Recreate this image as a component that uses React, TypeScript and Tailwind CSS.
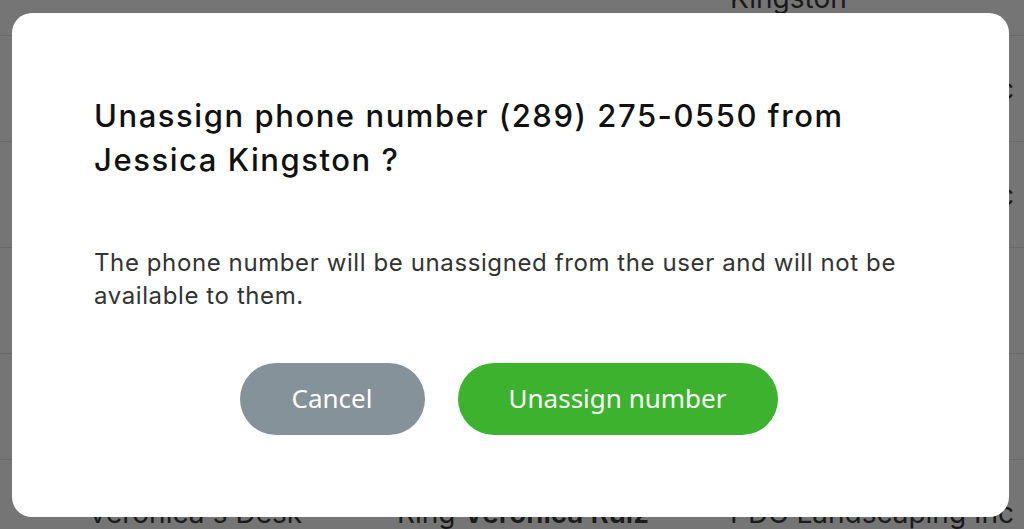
const rows = [
  { a: "", b: "", c: ["Jessica", "Kingston"] },
  { a: "", b: "", c: ["PDC Landscaping Inc"] },
  { a: "", b: "", c: ["PDC Landscaping Inc"] },
  { a: "", b: "", c: [] },
  { a: "", b: "", c: [] },
  { a: "Veronica's Desk", b: "Ring Veronica Ruiz", c: ["PDC Landscaping Inc"] }
];

export default function App() {
  return (
    <div className="relative h-[529px] w-[1024px] overflow-hidden bg-white font-['Inter',sans-serif]">
      <div className="mt-[-70px] flex flex-col">
        {rows.map((row, i) => (
          <div
            key={i}
            className="grid h-[106px] grid-cols-[309px_333px_1fr] items-center border-b border-[#e4e4e4] pl-[88px] text-[28px] leading-[30px] text-[#3a3a3a]"
          >
            <span className="whitespace-nowrap">{row.a}</span>
            <span className="whitespace-nowrap">
              {row.b.startsWith("Ring ") ? (
                <>
                  Ring <b className="font-semibold">{row.b.slice(5)}</b>
                </>
              ) : (
                row.b
              )}
            </span>
            <span className="flex flex-col whitespace-nowrap">
              {row.c.map((t) => (
                <span key={t}>{t}</span>
              ))}
            </span>
          </div>
        ))}
      </div>

      <div className="absolute inset-0 flex items-center bg-black/[0.54] pl-[12px]">
        <div className="flex h-[504px] w-[997px] flex-col rounded-[20px] bg-white px-[82px] pt-[81px]">
          <h2 className="text-[31px] font-medium leading-[44px] tracking-[0.05em] text-[#111]">
            Unassign phone number (289) 275-0550 from
            <br />
            Jessica Kingston ?
          </h2>
          <p className="mt-[64px] text-[24px] leading-[33px] tracking-[0.025em] text-[#333]">
            The phone number will be unassigned from the user and will not be available to them.
          </p>
          <div className="mt-[51px] flex justify-center gap-[33px] pr-[4px] font-['Noto_Sans',sans-serif] text-[26px] text-white">
            <button className="h-[72px] w-[185px] rounded-full bg-[#86929a]">Cancel</button>
            <button className="h-[72px] w-[320px] rounded-full bg-[#3db22f]">Unassign number</button>
          </div>
        </div>
      </div>
    </div>
  );
}
